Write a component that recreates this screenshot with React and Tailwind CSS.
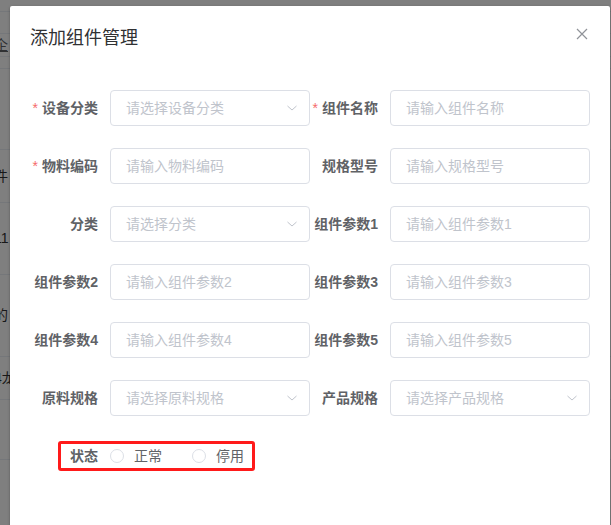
import React from 'react';

const font = { fontFamily: '"Liberation Sans", "Noto Sans CJK SC", sans-serif' };

const fields = [
  { label: '设备分类', placeholder: '请选择设备分类', select: true, required: true },
  { label: '组件名称', placeholder: '请输入组件名称', required: true },
  { label: '物料编码', placeholder: '请输入物料编码', required: true },
  { label: '规格型号', placeholder: '请输入规格型号' },
  { label: '分类', placeholder: '请选择分类', select: true },
  { label: '组件参数1', placeholder: '请输入组件参数1' },
  { label: '组件参数2', placeholder: '请输入组件参数2' },
  { label: '组件参数3', placeholder: '请输入组件参数3' },
  { label: '组件参数4', placeholder: '请输入组件参数4' },
  { label: '组件参数5', placeholder: '请输入组件参数5' },
  { label: '原料规格', placeholder: '请选择原料规格', select: true },
  { label: '产品规格', placeholder: '请选择产品规格', select: true },
];

// 背景表格的行（被遮罩盖住，只露出左边一点）
const bgRows = [
  { h: 12, text: '' },
  { h: 22, text: '' },
  { h: 23, text: '企', link: true },
  { h: 12, text: '' },
  { h: 81, text: '' },
  { h: 53, text: '件' },
  { h: 72, text: '11' },
  { h: 82, text: '的' },
  { h: 43, text: '4龙' },
  { h: 60, text: '' },
];

const Chevron = () => (
  <svg width="12" height="12" viewBox="0 0 12 12" className="shrink-0">
    <polyline points="1.5,4 6,8 10.5,4" fill="none" stroke="#c0c4cc" strokeWidth="1" />
  </svg>
);

const FormItem = ({ label, placeholder, select, required }) => (
  <div className="flex items-center h-[36px]">
    <div className="w-[80px] pr-[12px] text-right text-[14px] font-bold text-[#606266] whitespace-nowrap">
      {required && <span className="text-[#f56c6c] mr-[4px] font-normal">*</span>}
      {label}
    </div>
    <div className="w-[200px] h-[36px] border border-[#dcdfe6] rounded-[4px] flex items-center pl-[15px] pr-[11px] bg-white">
      <span className="flex-1 text-[14px] text-[#c0c4cc] whitespace-nowrap">{placeholder}</span>
      {select && <Chevron />}
    </div>
  </div>
);

const Radio = ({ label }) => (
  <div className="flex items-center">
    <span className="w-[14px] h-[14px] rounded-full border border-[#dcdfe6] bg-white" />
    <span className="ml-[10px] text-[14px] text-[#606266]">{label}</span>
  </div>
);

export default function App() {
  return (
    <div className="relative w-[611px] h-[525px] overflow-hidden bg-white" style={font}>
      {/* 背景页面 */}
      <div className="flex flex-col">
        {bgRows.map((r, i) => (
          <div
            key={i}
            className="border-b border-[#ebeef5] flex items-center text-[14px] text-[#303133] overflow-hidden"
            style={{ height: r.h }}
          >
            <span className={`ml-[-6px] whitespace-nowrap ${r.link ? 'underline text-[#606266]' : ''}`}>{r.text}</span>
          </div>
        ))}
      </div>

      {/* 遮罩 */}
      <div className="absolute inset-0 bg-black/50" />

      {/* 弹窗 */}
      <div className="absolute left-[10px] top-[6px] w-[600px] h-[540px] bg-white rounded-[2px] shadow-[0_1px_3px_rgba(0,0,0,0.3)]">
        <div className="flex items-center justify-between pt-[20px] px-[20px] pb-[10px]">
          <span className="text-[18px] leading-[24px] text-[#303133]">添加组件管理</span>
          <svg width="16" height="16" viewBox="0 0 16 16" className="mt-[-8px]">
            <path d="M3 3 L13 13 M13 3 L3 13" stroke="#909399" strokeWidth="1.2" />
          </svg>
        </div>

        <div className="px-[20px] pt-[30px]">
          <div className="grid grid-cols-[280px_280px] gap-y-[22px]">
            {fields.map((f) => (
              <FormItem key={f.label} {...f} />
            ))}
          </div>

          <div className="mt-[22px] h-[36px] flex items-center">
            <div className="ml-[28px] w-[197px] h-[30px] border-[3px] border-[#ff1a1a] rounded-[3px] flex items-center pl-[9px]">
              <span className="text-[14px] font-bold text-[#606266] mr-[12px]">状态</span>
              <Radio label="正常" />
              <div className="w-[30px]" />
              <Radio label="停用" />
            </div>
          </div>
        </div>
      </div>
    </div>
  );
}
